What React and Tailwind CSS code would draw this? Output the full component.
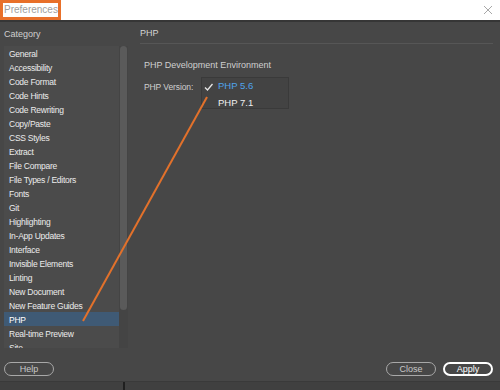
import React from "react";

const categories = [
  "General",
  "Accessibility",
  "Code Format",
  "Code Hints",
  "Code Rewriting",
  "Copy/Paste",
  "CSS Styles",
  "Extract",
  "File Compare",
  "File Types / Editors",
  "Fonts",
  "Git",
  "Highlighting",
  "In-App Updates",
  "Interface",
  "Invisible Elements",
  "Linting",
  "New Document",
  "New Feature Guides",
  "PHP",
  "Real-time Preview",
  "Site",
];

function PillButton({ label, primary }) {
  return (
    <button
      className={
        "w-[50px] h-[14px] rounded-full flex items-center justify-center text-[9px] leading-none " +
        (primary
          ? "border-2 border-white text-white"
          : "border border-[#a8a8a8] text-[#c8c8c8]")
      }
    >
      {label}
    </button>
  );
}

export default function App() {
  return (
    <div
      className="relative w-[500px] h-[390px] flex flex-col bg-[#474747] overflow-hidden"
      style={{ fontFamily: '"Liberation Sans", Arial, sans-serif' }}
    >
      {/* title bar */}
      <div className="h-[20px] bg-white flex items-center justify-between shrink-0">
        <div className="w-[61px] h-[20px] border-[3px] border-[#e8702a] flex items-center pl-[1px]">
          <span className="text-[10px] text-[#a0a0a0] leading-none">Preferences</span>
        </div>
        <svg width="10" height="10" viewBox="0 0 10 10" className="mr-[7px]">
          <path d="M1 1 L9 9 M9 1 L1 9" stroke="#a8a8a8" strokeWidth="1" />
        </svg>
      </div>
      <div className="h-[2px] bg-[#363636] shrink-0" />

      {/* body */}
      <div className="flex h-[326px] shrink-0">
        <div className="w-[128px] pl-[4px] flex flex-col shrink-0">
          <div className="h-[24px] flex items-center pt-[2px] text-[9px] text-[#cfcfcf]">Category</div>
          <div className="h-[302px] bg-[#4b4b4b] flex overflow-hidden">
            <div className="flex-1 flex flex-col">
              {categories.map((c) => (
                <div
                  key={c}
                  className={
                    "h-[14px] shrink-0 flex items-center pl-[5px] pt-[3px] text-[8.5px] tracking-[-0.25px] whitespace-nowrap " +
                    (c === "PHP" ? "bg-[#3f5a75] text-white" : "text-[#ececec]")
                  }
                >
                  {c}
                </div>
              ))}
            </div>
            <div className="w-[9px] bg-[#444444] flex justify-center">
              <div className="w-[7px] h-[264px] rounded-full bg-[#5a5a5a]" />
            </div>
          </div>
        </div>

        <div className="flex-1 pl-[12px] flex flex-col">
          <div className="h-[22px] flex items-center pt-[3px] text-[9px] text-[#d4d4d4] border-b border-[#565656] mr-[7px]">
            PHP
          </div>
          <div className="pl-[4px] pt-[15px] text-[9px] text-[#cfcfcf]">
            PHP Development Environment
          </div>
          <div className="flex pl-[4px] pt-[8px]">
            <div className="w-[57px] text-[8.5px] tracking-[-0.1px] text-[#cfcfcf]">PHP Version:</div>
            <div className="w-[88px] h-[32px] bg-[#434343] border border-[#3a3a3a] flex flex-col -mt-[4px]">
              <div className="h-[16px] flex items-center pl-[2px] pt-[2px]">
                <svg width="10" height="8" viewBox="0 0 10 8" className="mr-[4px]">
                  <path d="M1 4.5 L3.5 7 L8.5 1" stroke="#e6e6e6" strokeWidth="1.3" fill="none" />
                </svg>
                <span className="text-[9.5px] text-[#4fa3ec]">PHP 5.6</span>
              </div>
              <div className="h-[16px] flex items-center pl-[16px] pt-[3px] text-[9.5px] text-[#f0f0f0]">
                PHP 7.1
              </div>
            </div>
          </div>
        </div>
      </div>

      {/* footer buttons */}
      <div className="flex items-center justify-between px-[4px] pt-[9px] h-[33px] shrink-0">
        <PillButton label="Help" />
        <div className="flex gap-[7px] pr-[3px]">
          <PillButton label="Close" />
          <PillButton label="Apply" primary />
        </div>
      </div>

      {/* bottom strip */}
      <div className="flex-1 bg-[#404040] border-t border-[#3a3a3a] flex">
        <div className="w-[123px]" />
        <div className="w-[2px] bg-[#1f1f1f]" />
      </div>

      {/* annotation arrow line */}
      <svg className="absolute inset-0 pointer-events-none" width="500" height="390">
        <line x1="207" y1="97" x2="83" y2="321" stroke="#e2712b" strokeWidth="2" />
      </svg>
    </div>
  );
}
